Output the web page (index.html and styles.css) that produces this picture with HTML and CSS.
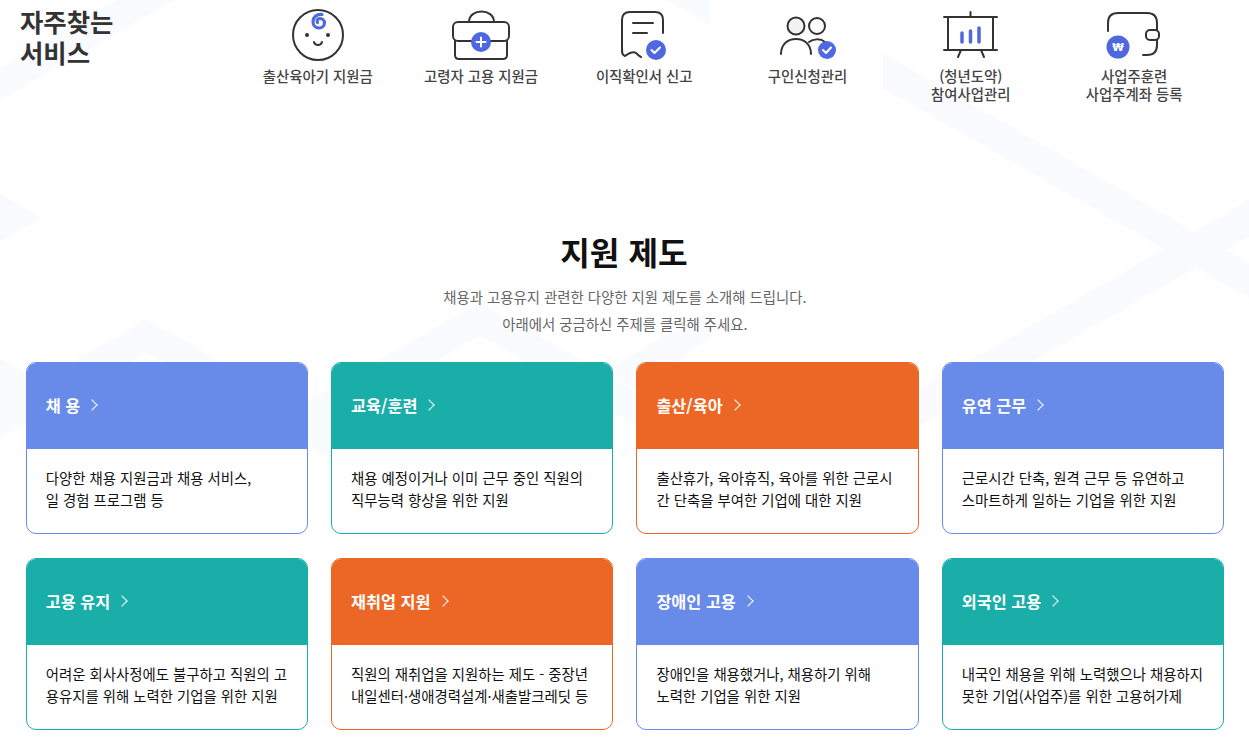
FILE: index.html
```html
<!DOCTYPE html>
<html lang="ko">
<head>
  <meta charset="UTF-8" />
  <meta name="viewport" content="width=device-width, initial-scale=1.0"/>
  <title>지원 제도</title>
  <link rel="stylesheet" href="styles.css">
</head>
<body>

  <!-- Pale background pattern -->
  <svg class="bg-pattern" width="1249" height="751" viewBox="0 0 1249 751">
    <polygon points="0,67 117,0 175,0 0,100"/>
    <polygon points="667,0 710,25 710,0"/>
    <polygon points="883,53 1249,263 1249,298 883,88"/>
    <polygon points="1249,200 800,458 800,495 1249,237"/>
    <polygon points="0,193 41,218 0,242"/>
    <polygon points="0,358 70,398 0,438"/>
    <polygon points="147,319 347,434 347,468 147,352 -53,468 -53,434"/>
    <polygon points="480,302 680,417 680,451 480,336 280,451 280,417"/>
    <polygon points="710,310 600,373 640,390 710,337"/>
  </svg>

  <!-- Quick services -->
  <section class="quick">
    <h3 class="quick-title">자주찾는<br>서비스</h3>
    <ul class="quick-list">
      <li class="quick-item">
        <svg class="quick-icon" viewBox="0 0 70 58">
          <circle cx="35" cy="29" r="25"/>
          <path class="blue-line" d="M39 8.5 C33.5 8 30 11.5 30 15.5 C30 19.5 32.5 22 36 22 C39.5 22 41.5 19.5 41.5 17 C41.5 14 39 12.5 36.5 12.5 C34.5 12.5 33.5 14.5 34.5 16.5"/>
          <circle class="dark-dot" cx="24" cy="29" r="2"/>
          <circle class="dark-dot" cx="45" cy="29" r="2"/>
          <path d="M31 36 C32 40 38 40 39 36"/>
        </svg>
        <span>출산육아기 지원금</span>
      </li>
      <li class="quick-item">
        <svg class="quick-icon" viewBox="0 0 70 58">
          <path d="M23 16 C23 2 48 2 48 16"/>
          <rect x="7" y="16" width="56" height="19" rx="5"/>
          <path d="M9 35 V49 Q9 53 13 53 H57 Q61 53 61 49 V35"/>
          <circle class="blue-dot" cx="35" cy="36" r="10"/>
          <path class="white-line" d="M30.5 36 H39.5 M35 31.5 V40.5"/>
        </svg>
        <span>고령자 고용 지원금</span>
      </li>
      <li class="quick-item">
        <svg class="quick-icon" viewBox="0 0 70 58">
          <path d="M54 27 V14 Q54 6 46 6 H21 Q13 6 13 14 V45 Q13 49 16 50 C20 47 24 45 27 47 C29 49 30 50 32 51"/>
          <path d="M24 17 H44 M24 27 H38"/>
          <circle class="blue-dot" cx="47" cy="44" r="10"/>
          <path class="white-line" d="M42.5 44 L45.5 47 L51 41.5"/>
        </svg>
        <span>이직확인서 신고</span>
      </li>
      <li class="quick-item">
        <svg class="quick-icon" viewBox="0 0 70 58">
          <circle class="grey-fill" cx="23" cy="20" r="8.5"/>
          <circle cx="44" cy="20" r="8"/>
          <path d="M8 48 C8 38 15 33 23 33 C31 33 38 38 38 48"/>
          <path d="M36 36 C40 33 47 32 52 36"/>
          <circle class="blue-dot" cx="54" cy="44" r="9"/>
          <path class="white-line" d="M50 44 L53 47 L58 41.5"/>
        </svg>
        <span>구인신청관리</span>
      </li>
      <li class="quick-item">
        <svg class="quick-icon" viewBox="0 0 70 58">
          <path d="M8 11 H61 M8 44 H61 M34.5 6 V11 M12 11 V44 M57 11 V44 M25 44 L22 51 M45 44 L48 51"/>
          <path class="blue-bar" d="M26 27 V36 M34.5 25 V36 M43 22 V36"/>
        </svg>
        <span>(청년도약)<br>참여사업관리</span>
      </li>
      <li class="quick-item">
        <svg class="quick-icon" viewBox="0 0 70 58">
          <path d="M9 25 V17 Q9 7 19 7 H48 Q58 7 58 17 V24 M58 34 V39 Q58 49 48 49 H44"/>
          <rect x="47" y="24" width="13" height="10" rx="4"/>
          <circle class="blue-dot" cx="19" cy="41" r="11.5"/>
          <text class="won" x="19" y="45" text-anchor="middle">₩</text>
        </svg>
        <span>사업주훈련<br>사업주계좌 등록</span>
      </li>
    </ul>
  </section>

  <!-- Support programs -->
  <section class="support">
    <h2 class="support-title">지원 제도</h2>
    <p class="support-desc">채용과 고용유지 관련한 다양한 지원 제도를 소개해 드립니다.<br>아래에서 궁금하신 주제를 클릭해 주세요.</p>

    <div class="card-grid">
      <a class="card blue" href="#">
        <div class="card-head">채 용</div>
        <p class="card-text">다양한 채용 지원금과 채용 서비스,<br>일 경험 프로그램 등</p>
      </a>
      <a class="card green" href="#">
        <div class="card-head">교육/훈련</div>
        <p class="card-text">채용 예정이거나 이미 근무 중인 직원의<br>직무능력 향상을 위한 지원</p>
      </a>
      <a class="card orange" href="#">
        <div class="card-head">출산/육아</div>
        <p class="card-text">출산휴가, 육아휴직, 육아를 위한 근로시<br>간 단축을 부여한 기업에 대한 지원</p>
      </a>
      <a class="card blue" href="#">
        <div class="card-head">유연 근무</div>
        <p class="card-text">근로시간 단축, 원격 근무 등 유연하고<br>스마트하게 일하는 기업을 위한 지원</p>
      </a>
      <a class="card green" href="#">
        <div class="card-head">고용 유지</div>
        <p class="card-text">어려운 회사사정에도 불구하고 직원의 고<br>용유지를 위해 노력한 기업을 위한 지원</p>
      </a>
      <a class="card orange" href="#">
        <div class="card-head">재취업 지원</div>
        <p class="card-text">직원의 재취업을 지원하는 제도 - 중장년<br>내일센터·생애경력설계·새출발크레딧 등</p>
      </a>
      <a class="card blue" href="#">
        <div class="card-head">장애인 고용</div>
        <p class="card-text">장애인을 채용했거나, 채용하기 위해<br>노력한 기업을 위한 지원</p>
      </a>
      <a class="card green" href="#">
        <div class="card-head">외국인 고용</div>
        <p class="card-text">내국인 채용을 위해 노력했으나 채용하지<br>못한 기업(사업주)를 위한 고용허가제</p>
      </a>
    </div>
  </section>

</body>
</html>
```

FILE: styles.css
```css
* {
  box-sizing: border-box;
}

html,
body {
  margin: 0;
  height: 751px;
  overflow: hidden;
}

body {
  position: relative;
  background: #fff;
  font-family: "Noto Sans CJK KR", "Noto Sans", sans-serif;
  color: #333;
}

.bg-pattern {
  position: absolute;
  top: 0;
  left: 0;
  z-index: 0;
}

.bg-pattern polygon {
  fill: #fafbff;
}

/* Quick services */
.quick {
  position: relative;
  display: flex;
  height: 106px;
  padding: 6px 0 0 20px;
}

.quick-title {
  width: 216px;
  margin: 0;
  font-size: 25.4px;
  line-height: 31px;
  font-weight: 700;
  color: #333;
}

.quick-list {
  display: flex;
  margin: 0;
  padding: 0;
  list-style: none;
}

.quick-item {
  display: flex;
  flex-direction: column;
  align-items: center;
  width: 163.3px;
  font-size: 14.4px;
  line-height: 18px;
  font-weight: 500;
  color: #444;
  text-align: center;
}

.quick-icon {
  width: 70px;
  height: 58px;
  margin-bottom: 3px;
  fill: none;
  stroke: #333;
  stroke-width: 2;
  stroke-linecap: round;
  stroke-linejoin: round;
}

.quick-icon .blue-line {
  stroke: #4f68e0;
  stroke-width: 3.2;
}

.quick-icon .blue-bar {
  stroke: #4f68e0;
  stroke-width: 3.5;
}

.quick-icon .blue-dot {
  fill: #4f68e0;
  stroke: none;
}

.quick-icon .dark-dot {
  fill: #333;
  stroke: none;
}

.quick-icon .grey-fill {
  fill: #f2f2f2;
}

.quick-icon .white-line {
  stroke: #fff;
}

.quick-icon .won {
  fill: #fff;
  stroke: none;
  font-family: "DejaVu Sans", sans-serif;
  font-size: 10.5px;
  font-weight: 700;
}

/* Support programs */
.support {
  position: relative;
  padding: 0 25px 0 25.8px;
}

.support-title {
  margin: 0;
  padding: 124px 2px 0 0;
  font-size: 32.2px;
  line-height: 42px;
  font-weight: 700;
  color: #111;
  text-align: center;
}

.support-desc {
  margin: 11px 0 25px;
  font-size: 14.4px;
  line-height: 27px;
  color: #666;
  text-align: center;
}

.card-grid {
  display: grid;
  grid-template-columns: repeat(4, 1fr);
  gap: 24px 23px;
}

.card {
  display: block;
  height: 172px;
  background: #fff;
  border: 1px solid;
  border-radius: 10px;
  overflow: hidden;
  color: #111;
  text-decoration: none;
}

.card.blue {
  border-color: #688ae8;
}

.card.green {
  border-color: #19aea8;
}

.card.orange {
  border-color: #ec6726;
}

.card-head {
  display: flex;
  align-items: center;
  height: 86px;
  padding: 0 0 2px 19px;
  font-size: 16.3px;
  font-weight: 700;
  color: #fff;
}

.card-head::after {
  content: "";
  width: 7px;
  height: 7px;
  margin-left: 8px;
  border-top: 1.5px solid #fff;
  border-right: 1.5px solid #fff;
  transform: rotate(45deg);
}

.blue .card-head {
  background: #688ae8;
}

.green .card-head {
  background: #19aea8;
}

.orange .card-head {
  background: #ec6726;
}

.card-text {
  margin: 0;
  padding: 18px 19px 0;
  font-size: 14.4px;
  line-height: 22px;
  white-space: nowrap;
}
```
